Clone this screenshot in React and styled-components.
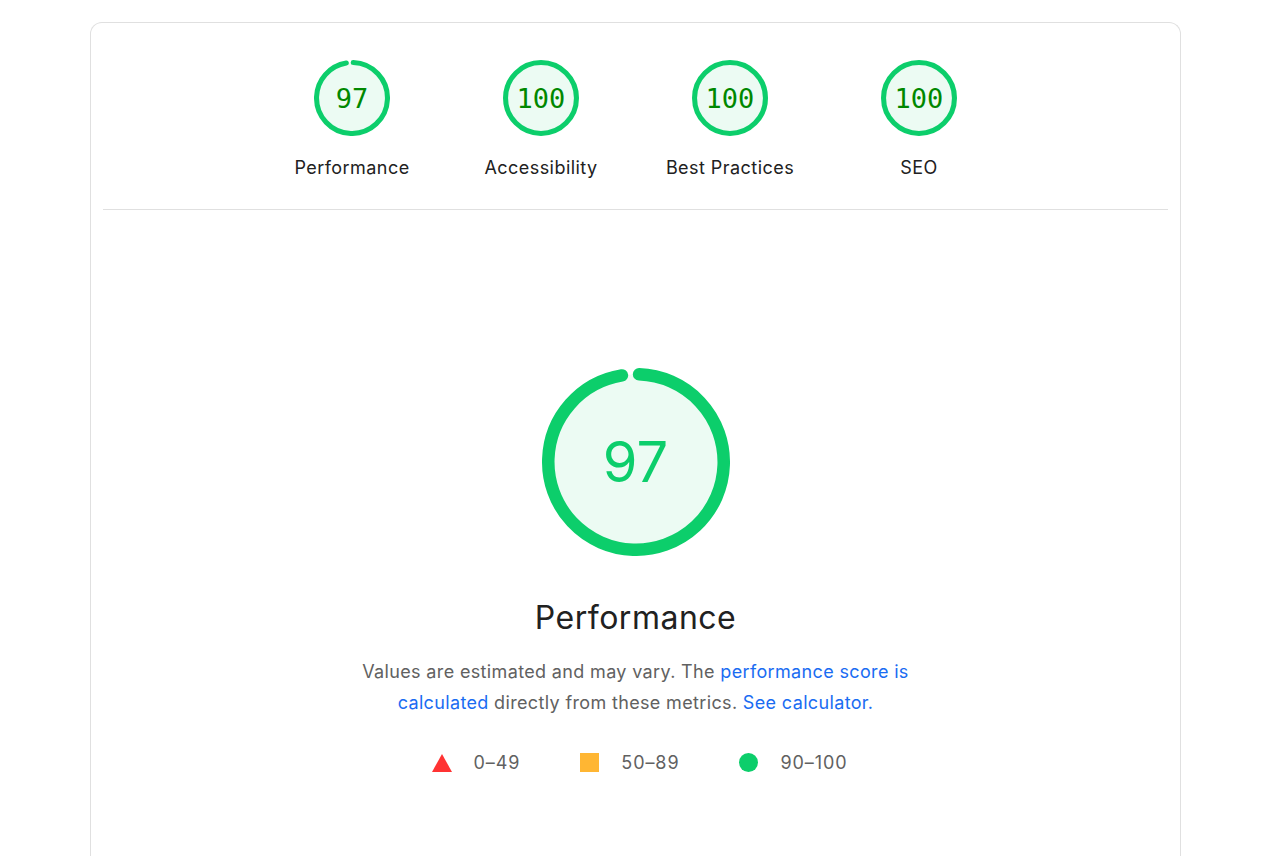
import React from 'react';
import styled, {createGlobalStyle} from 'styled-components';

const PASS = '#0cce6b';

const GlobalStyle = createGlobalStyle`
  body {
    margin: 0;
    background: #fff;
    font-family: Inter, Roboto, "Liberation Sans", Arial, sans-serif;
    color: #212121;
  }
`;

const Page = styled.div`
  padding: 22px 83px 0 90px;
`;

const Card = styled.div`
  border: 1px solid #e0e0e0;
  border-bottom: none;
  border-radius: 12px 12px 0 0;
  padding: 0 12px 80px;
  min-height: 860px;
  box-sizing: border-box;
`;

const ScoreRow = styled.div`
  display: flex;
  justify-content: center;
  padding: 37px 0 30px;
  border-bottom: 1px solid #e0e0e0;
`;

const ScoreItem = styled.div`
  width: 189px;
  display: flex;
  flex-direction: column;
  align-items: center;
  gap: 21px;
`;

const GaugeBox = styled.div`
  position: relative;
  width: ${p => p.$size}px;
  height: ${p => p.$size}px;
`;

const GaugeSvg = styled.svg`
  display: block;
  width: 100%;
  height: 100%;
`;

const GaugeValue = styled.span`
  position: absolute;
  inset: 0;
  display: flex;
  align-items: center;
  justify-content: center;
  color: ${p => p.$color};
  font-family: ${p => p.$mono ? '"DejaVu Sans Mono", "Liberation Mono", monospace' : 'Inter, Roboto, sans-serif'};
  font-size: ${p => p.$fontSize}px;
`;

const GaugeLabel = styled.div`
  font-size: 18px;
  letter-spacing: 0.45px;
  color: #212121;
  line-height: 22px;
`;

const Summary = styled.div`
  display: flex;
  flex-direction: column;
  align-items: center;
  padding-top: 158px;
`;

const Title = styled.h2`
  margin: 42px 0 0;
  font-weight: 400;
  font-size: 32px;
  letter-spacing: 0.5px;
  line-height: 40px;
  color: #212121;
`;

const Description = styled.p`
  margin: 18px 0 0;
  max-width: 580px;
  text-align: center;
  font-size: 18px;
  letter-spacing: 0.35px;
  line-height: 31px;
  color: #616161;
`;

const Link = styled.a`
  color: #1a6cf2;
  text-decoration: none;
`;

const Legend = styled.div`
  display: flex;
  align-items: center;
  gap: 60px;
  margin-top: 34px;
  padding-left: 8px;
  font-size: 18px;
  letter-spacing: 0.9px;
  color: #616161;
`;

const LegendItem = styled.span`
  display: flex;
  align-items: center;
  gap: 22px;
`;

const Square = styled.span`
  width: 19px;
  height: 19px;
  background: #ffa400;
  opacity: 0.8;
`;

const Dot = styled.span`
  width: 19px;
  height: 19px;
  border-radius: 50%;
  background: ${PASS};
`;

const Gauge = ({score, size, fontSize, mono, textColor}) => {
    const r = 56;
    const c = 2 * Math.PI * r;
    const len = (score / 100) * c;
    return (
        <GaugeBox $size={size}>
            <GaugeSvg viewBox="0 0 120 120">
                <circle cx="60" cy="60" r={r} fill="rgba(12,206,107,0.08)" />
                <circle
                    cx="60"
                    cy="60"
                    r={r}
                    fill="none"
                    stroke={PASS}
                    strokeWidth="8"
                    strokeLinecap={score < 100 ? 'round' : 'butt'}
                    strokeDasharray={`${score < 100 ? len - 1 : c} ${c}`}
                    transform={score < 100 ? 'rotate(-88 60 60)' : 'rotate(-90 60 60)'}
                />
            </GaugeSvg>
            <GaugeValue $color={textColor} $fontSize={fontSize} $mono={mono}>{score}</GaugeValue>
        </GaugeBox>
    );
};

const categories = [
    {label: 'Performance', score: 97},
    {label: 'Accessibility', score: 100},
    {label: 'Best Practices', score: 100},
    {label: 'SEO', score: 100},
];

export default function App() {
    return (
        <Page>
            <GlobalStyle />
            <Card>
                <ScoreRow>
                    {categories.map(cat => (
                        <ScoreItem key={cat.label}>
                            <Gauge score={cat.score} size={76} fontSize={27} mono textColor="#008800" />
                            <GaugeLabel>{cat.label}</GaugeLabel>
                        </ScoreItem>
                    ))}
                </ScoreRow>
                <Summary>
                    <Gauge score={97} size={188} fontSize={56} textColor={PASS} />
                    <Title>Performance</Title>
                    <Description>
                        Values are estimated and may vary. The{' '}
                        <Link href="#">performance score is calculated</Link>{' '}
                        directly from these metrics. <Link href="#">See calculator.</Link>
                    </Description>
                    <Legend>
                        <LegendItem>
                            <svg width="20" height="18" viewBox="0 0 20 18">
                                <polygon points="10,0 20,18 0,18" fill="#ff3333" />
                            </svg>
                            0–49
                        </LegendItem>
                        <LegendItem><Square />50–89</LegendItem>
                        <LegendItem><Dot />90–100</LegendItem>
                    </Legend>
                </Summary>
            </Card>
        </Page>
    );
}
